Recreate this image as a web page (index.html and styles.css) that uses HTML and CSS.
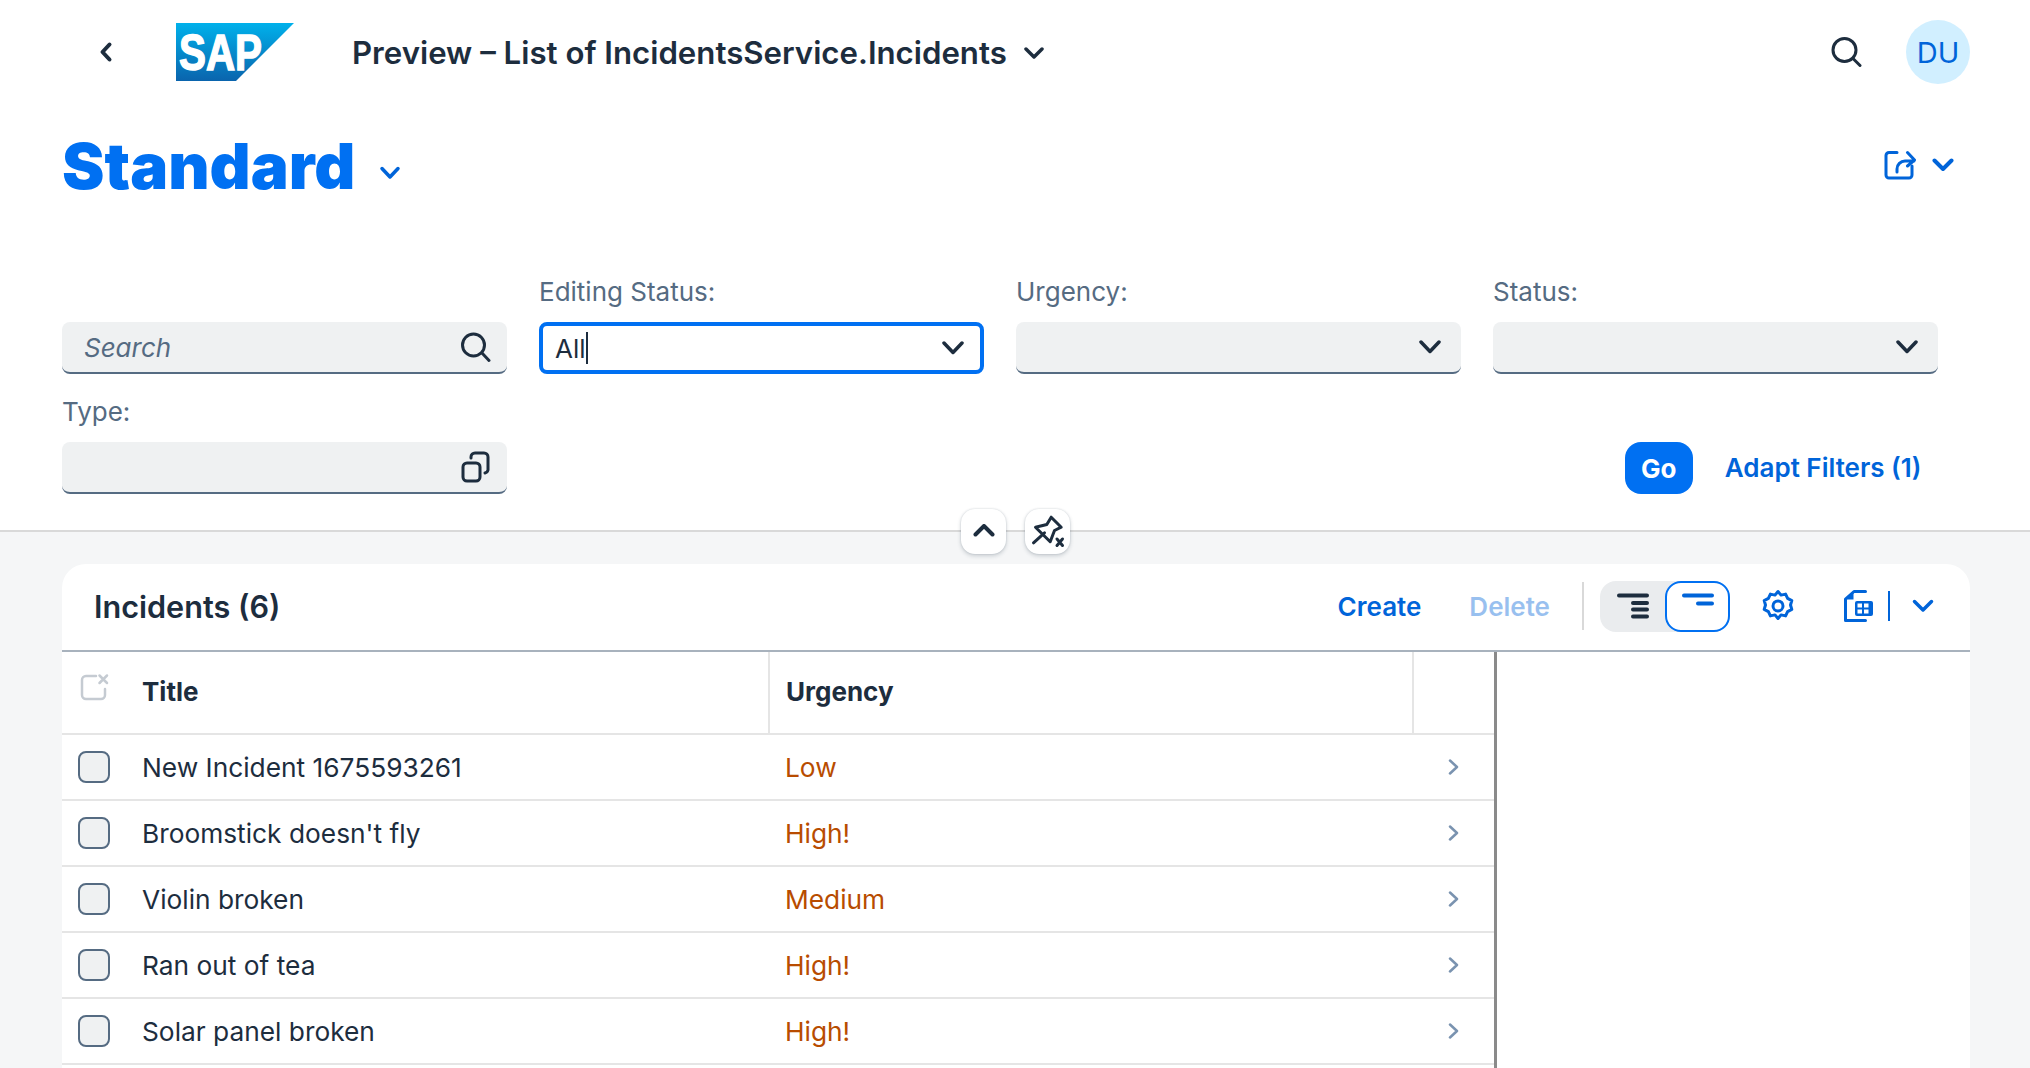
FILE: index.html
```html
<!DOCTYPE html>
<html lang="en">
<head>
<meta charset="utf-8">
<title>Preview – List of IncidentsService.Incidents</title>
<link rel="stylesheet" href="styles.css">
</head>
<body>
<header class="shell">
  <button class="shell-back" aria-label="Back"><svg width="20" height="24" viewBox="0 0 20 24"><path d="M13.500 4.500 6.500 12l7 7.500" class="st s4 dark"/></svg></button>
  <svg class="logo" width="118" height="58" viewBox="0 0 118 58"><defs><linearGradient id="sapg" x1="0" y1="0" x2="0" y2="1"><stop offset="0" stop-color="#00b1eb"/><stop offset="1" stop-color="#0a64ad"/></linearGradient></defs><polygon points="0,0 118,0 60,58 0,58" fill="url(#sapg)"/><text x="3" y="47" class="logo-text" textLength="83" lengthAdjust="spacingAndGlyphs">SAP</text></svg>
  <h1 class="shell-title">Preview – List of IncidentsService.Incidents</h1>
  <svg class="shell-caret" width="20" height="14" viewBox="0 0 20 14"><path d="M2 3 10 11l8-8" class="st s35 dark"/></svg>
  <div class="shell-right">
    <svg width="32" height="32" viewBox="0 0 32 32"><circle cx="14.500" cy="14" r="11.500" class="st s3 dark"/><path d="m23 22.500 7 7" class="st s3 dark"/></svg>
    <div class="avatar">DU</div>
  </div>
</header>

<section class="variant">
  <div class="variant-left">
    <span class="variant-name">Standard</span>
    <svg width="22" height="16" viewBox="0 0 22 16"><path d="M3 3.500 11 12l8-8.500" class="st s35 blue"/></svg>
  </div>
  <div class="variant-right">
    <svg width="32" height="30" viewBox="0 0 32 30"><path d="M13 2.500H5a3 3 0 0 0-3 3V25a3 3 0 0 0 3 3h20a3 3 0 0 0 3-3v-9" class="st s3 blue"/><path d="M13 22v-3a8 8 0 0 1 8-8h9M23.500 2.500 30.500 10l-7 6" class="st s3 blue"/></svg>
    <svg width="22" height="16" viewBox="0 0 22 16"><path d="M2.500 3.500 11 12l8.500-8.500" class="st s4 blue"/></svg>
  </div>
</section>

<section class="filters">
  <div class="field">
    <div class="input input-empty"><span class="placeholder">Search</span>
      <svg width="32" height="32" viewBox="0 0 32 32"><circle cx="14.500" cy="14" r="11" class="st s3 dark"/><path d="m23 22 7 7.500" class="st s3 dark"/></svg>
    </div>
  </div>
  <div class="field">
    <label class="label">Editing Status:</label>
    <div class="input input-focus"><span class="value">All</span><span class="caret-line"></span>
      <svg class="chev" width="22" height="16" viewBox="0 0 22 16"><path d="M2 3 11 12.500 20 3" class="st s35 dark"/></svg>
    </div>
  </div>
  <div class="field">
    <label class="label">Urgency:</label>
    <div class="input input-select"><svg class="chev" width="22" height="16" viewBox="0 0 22 16"><path d="M2 3 11 12.500 20 3" class="st s35 dark"/></svg></div>
  </div>
  <div class="field">
    <label class="label">Status:</label>
    <div class="input input-select"><svg class="chev" width="22" height="16" viewBox="0 0 22 16"><path d="M2 3 11 12.500 20 3" class="st s35 dark"/></svg></div>
  </div>
  <div class="field">
    <label class="label">Type:</label>
    <div class="input"><svg width="30" height="32" viewBox="0 0 30 32"><rect x="2" y="12" width="17" height="18" rx="4" class="st s3 dark"/><path d="M10 7V6a4 4 0 0 1 4-4h9a4 4 0 0 1 4 4v13a4 4 0 0 1-3 3" class="st s3 dark"/></svg></div>
  </div>
  <div class="filter-actions">
    <button class="go">Go</button>
    <button class="adapt">Adapt Filters (1)</button>
  </div>
</section>

<div class="divider">
  <button class="float-btn" aria-label="Collapse"><svg width="22" height="14" viewBox="0 0 22 14"><path d="M2.500 10.500 11 2l8.500 8.500" class="st s4 dark"/></svg></button>
  <button class="float-btn" aria-label="Unpin"><svg width="36" height="36" viewBox="0 0 36 36"><path d="M3.500 29.800 14.500 19.800M5.500 14.200 16.800 11.500 21.200 4.200 31.200 14.200 24.500 17.500 20.200 28.800Z" class="st s3 dark"/><path d="m27 26 5.500 6.500M32.500 26 27 32.500" class="st s3 dark"/></svg></button>
</div>

<main class="content">
  <article class="card">
    <div class="toolbar">
      <h2 class="card-title">Incidents (6)</h2>
      <div class="toolbar-actions">
        <button class="tb-text">Create</button>
        <button class="tb-text disabled">Delete</button>
        <span class="tb-sep"></span>
        <div class="segment">
          <button class="seg-btn"><svg width="32" height="26" viewBox="0 0 32 26"><path d="M2 2.500h28M16 10h14M16 16.500h14M16 23.500h14" class="st s4 dark"/></svg></button>
          <button class="seg-btn seg-on"><svg width="32" height="14" viewBox="0 0 32 14"><path d="M2 2.500h28M16 10.500h14" class="st s4 blue"/></svg></button>
        </div>
        <svg class="gear" width="32" height="34" viewBox="0 0 32 34"><path d="M16 2.500l3 3.600 4.600-1 2 4.300 4.200 2.200-1.300 4.400 1.300 4.400-4.200 2.200-2 4.300-4.600-1-3 3.600-3-3.600-4.600 1-2-4.300-4.200-2.200 1.300-4.400-1.300-4.400 4.200-2.200 2-4.300 4.600 1z" class="st s3 blue"/><circle cx="16" cy="16.900" r="5" class="st s3 blue"/></svg>
        <svg class="export" width="32" height="34" viewBox="0 0 32 34"><path d="M22.500 2.500H11L2.500 10v21.500h20" class="st s3 blue"/><path d="M3 10.500h7.500V3Z" fill="#0064d9"/><rect x="12" y="12" width="18" height="15" rx="2" fill="#0064d9"/><path d="M14.500 14.500h4.500v4h-4.500zM21 14.500h4.500v4H21zM14.500 20.500h4.500v4h-4.500zM21 20.500h4.500v4H21z" fill="#fff"/></svg>
        <span class="tb-pipe"></span>
        <svg class="tb-chev" width="22" height="16" viewBox="0 0 22 16"><path d="M2.500 3.500 11 12l8.500-8.500" class="st s35 blue"/></svg>
      </div>
    </div>
    <div class="table-wrap">
      <table class="grid">
        <colgroup><col class="c-sel"><col class="c-title"><col class="c-urg"><col class="c-nav"></colgroup>
        <thead>
          <tr>
            <th class="sel"><svg class="selall" width="30" height="30" viewBox="0 0 30 30"><path d="M16 3H6a4 4 0 0 0-4 4v15a4 4 0 0 0 4 4h15a4 4 0 0 0 4-4v-6" class="st s25 muted"/><path d="m19.500 2.500 7.500 7.500M27 2.500 19.500 10" class="st s25 muted"/></svg></th>
            <th>Title</th>
            <th class="bordered">Urgency</th>
            <th class="bordered"></th>
          </tr>
        </thead>
        <tbody>
          <tr><td class="sel"><span class="check"></span></td><td>New Incident 1675593261</td><td class="crit">Low</td><td class="nav"><svg width="12" height="16" viewBox="0 0 12 16"><path d="M2 1.500 9 8l-7 6.500" class="st s25 nav-ic"/></svg></td></tr>
          <tr><td class="sel"><span class="check"></span></td><td>Broomstick doesn't fly</td><td class="crit">High!</td><td class="nav"><svg width="12" height="16" viewBox="0 0 12 16"><path d="M2 1.500 9 8l-7 6.500" class="st s25 nav-ic"/></svg></td></tr>
          <tr><td class="sel"><span class="check"></span></td><td>Violin broken</td><td class="crit">Medium</td><td class="nav"><svg width="12" height="16" viewBox="0 0 12 16"><path d="M2 1.500 9 8l-7 6.500" class="st s25 nav-ic"/></svg></td></tr>
          <tr><td class="sel"><span class="check"></span></td><td>Ran out of tea</td><td class="crit">High!</td><td class="nav"><svg width="12" height="16" viewBox="0 0 12 16"><path d="M2 1.500 9 8l-7 6.500" class="st s25 nav-ic"/></svg></td></tr>
          <tr><td class="sel"><span class="check"></span></td><td>Solar panel broken</td><td class="crit">High!</td><td class="nav"><svg width="12" height="16" viewBox="0 0 12 16"><path d="M2 1.500 9 8l-7 6.500" class="st s25 nav-ic"/></svg></td></tr>
        </tbody>
      </table>
    </div>
  </article>
</main>
</body>
</html>
```
FILE: styles.css
```css
* { box-sizing: border-box; }
html, body { margin: 0; height: 100%; }
body {
  width: 2030px; height: 1068px; overflow: hidden; background: #fff; color: #1d2d3e;
  font-family: Inter, "Noto Sans", sans-serif; display: flex; flex-direction: column;
}
button { font: inherit; border: 0; background: none; padding: 0; color: inherit; }
svg { display: block; flex: none; }
.st { fill: none; stroke-linecap: round; stroke-linejoin: round; }
.s25 { stroke-width: 2.5; }
.s3 { stroke-width: 3; }
.s35 { stroke-width: 3.5; }
.s4 { stroke-width: 4; }
.dark { stroke: #1d2d3e; }
.blue { stroke: #0064d9; }
.muted { stroke: #c5cbd2; }
.nav-ic { stroke: #7a93b0; }

.shell { height: 104px; display: flex; align-items: center; flex: none; }
.shell-back { margin-left: 96px; width: 20px; }
.logo { margin-left: 60px; }
.logo-text { font: 700 50px "Liberation Sans", sans-serif; fill: #fff; stroke: #fff; stroke-width: 1.5; }
.shell-title { margin: 2px 0 0 58px; font-size: 31.2px; font-weight: 600; white-space: nowrap; }
.shell-caret { margin-left: 17px; margin-top: 2px; }
.shell-right { margin-left: auto; margin-right: 60px; display: flex; align-items: center; gap: 44px; }
.avatar {
  width: 64px; height: 64px; border-radius: 50%; background: #d1efff; color: #0064d9;
  display: flex; align-items: center; justify-content: center; font-size: 29px;
}

.variant { height: 164px; flex: none; display: flex; justify-content: space-between; align-items: flex-start; padding: 22px 76px 0 62px; }
.variant-left { display: flex; align-items: center; gap: 24px; }
.variant-left svg { margin-top: 14px; }
.variant-name { font-size: 63.700px; font-weight: 900; color: #0070f2; line-height: 80px; }
.variant-right { display: flex; align-items: center; gap: 16px; margin-top: 24px; }

.filters { flex: none; display: grid; grid-template-columns: repeat(4, 444.5px); column-gap: 32.5px; padding: 0 92px 0 62px; height: 262px; align-content: start; row-gap: 14px; position: relative; }
.field { display: flex; flex-direction: column; justify-content: flex-end; height: 106px; }
.label { font-size: 26px; line-height: 38px; color: #556b82; margin-bottom: 11px; }
.input {
  height: 52px; background: #eff1f2; border-radius: 8px; border-bottom: 2px solid #556b82;
  display: flex; align-items: center; justify-content: flex-end; padding: 0 16px 0 22px; font-size: 26px;
}
.input-empty { justify-content: space-between; }
.input-select { padding-right: 20px; }
.placeholder { font-style: italic; color: #556b82; }
.input-focus { background: #fff; border: 4px solid #0070f2; padding-left: 12px; justify-content: flex-start; }
.value { color: #1d2d3e; }
.caret-line { width: 2px; height: 32px; background: #1d2d3e; }
.chev { margin-left: auto; }
.filter-actions { grid-column: 2 / 5; display: flex; justify-content: flex-end; align-items: flex-end; height: 106px; gap: 32px; padding-right: 16px; }
.go { width: 68px; height: 52px; border-radius: 16px; background: #0070f2; color: #fff; font-size: 26px; font-weight: 700; }
.adapt { height: 52px; color: #0064d9; font-size: 26px; font-weight: 600; padding-bottom: 2px; }

.divider { flex: none; height: 2px; background: #d9d9d9; display: flex; justify-content: center; align-items: center; gap: 19px; padding-left: 1px; position: relative; z-index: 2; }
.float-btn { width: 45px; height: 45px; border-radius: 14px; background: #fff; box-shadow: 0 0 2px rgba(34,54,73,.2), 0 2px 4px rgba(34,54,73,.2); display: flex; align-items: center; justify-content: center; }

.content { flex: 1; background: #f5f6f7; padding: 32px 60px 0 62px; overflow: hidden; }
.card { background: #fff; border-radius: 24px 24px 0 0; height: 100%; }
.toolbar { height: 88px; border-bottom: 2px solid #a8b2bd; display: flex; align-items: center; justify-content: space-between; padding: 0 36px 2px 32px; }
.card-title { margin: 0; font-size: 30.6px; font-weight: 600; }
.toolbar-actions { display: flex; align-items: center; }
.tb-text { color: #0064d9; font-size: 26px; font-weight: 600; margin-right: 48px; }
.tb-text.disabled { opacity: .4; margin-right: 32px; }
.tb-sep { width: 2px; height: 48px; background: #d9d9d9; margin-right: 16px; }
.segment { display: flex; width: 130px; height: 51px; background: #eaecee; border-radius: 16px; }
.seg-btn { width: 65px; display: flex; align-items: center; justify-content: center; }
.seg-on { background: #fff; border: 2px solid #0070f2; border-radius: 16px; align-items: flex-start; padding-top: 10px; }
.gear { margin-left: 32px; }
.export { margin-left: 49px; }
.tb-pipe { width: 2px; height: 30px; background: #0064d9; margin-left: 13px; margin-right: 22px; }

.table-wrap { width: 1435px; border-right: 3px solid #8a8a8a; height: 416px; overflow: hidden; }
.grid { width: 100%; border-collapse: collapse; table-layout: fixed; font-size: 26.3px; }
.c-sel { width: 64px; }
.c-urg { width: 644px; }
.c-nav { width: 81px; }
.grid th { height: 82px; text-align: left; font-weight: 700; font-size: 26px; border-bottom: 2px solid #e5e5e5; padding: 0 0 2px 16px; }
.grid th.sel, .grid td.sel { padding: 0; }
.grid th.bordered { border-left: 2px solid #e5e5e5; }
.grid td { height: 66px; border-bottom: 2px solid #e5e5e5; padding: 0 0 0 16px; }
.selall { margin: -10px 0 0 18px; }
.check { display: block; width: 32px; height: 32px; margin-left: 16px; border: 2px solid #556b82; border-radius: 8px; background: #eff1f2; }
.crit { color: #b84c00; }
.grid td.nav { padding-left: 35px; }
```
